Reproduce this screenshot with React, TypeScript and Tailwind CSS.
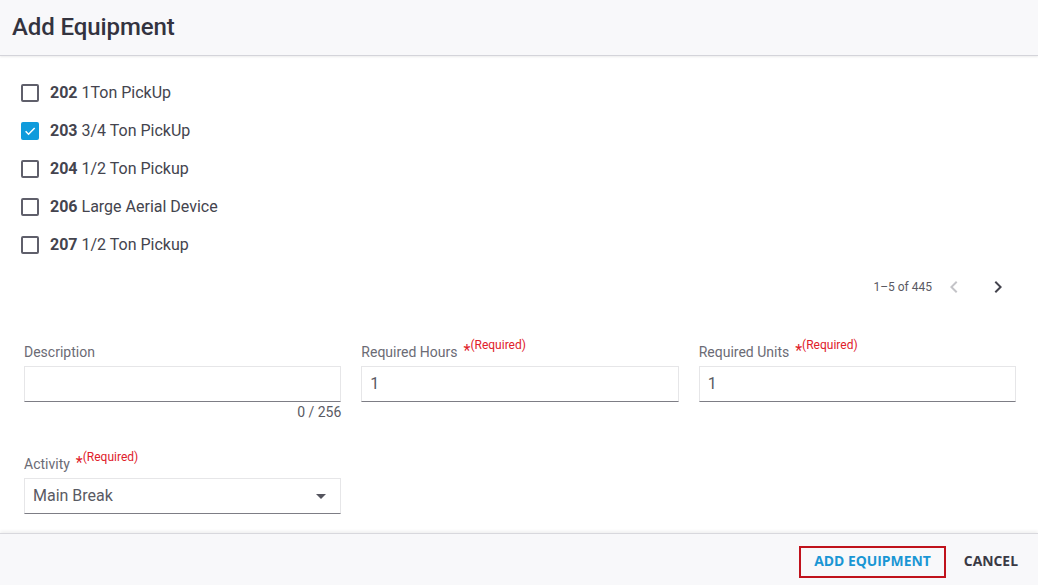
import React from "react";

const items = [
  { code: "202", name: "1Ton PickUp", checked: false },
  { code: "203", name: "3/4 Ton PickUp", checked: true },
  { code: "204", name: "1/2 Ton Pickup", checked: false },
  { code: "206", name: "Large Aerial Device", checked: false },
  { code: "207", name: "1/2 Ton Pickup", checked: false },
];

function Box({ checked }: { checked: boolean }) {
  if (checked)
    return (
      <div className="w-[18px] h-[18px] rounded-[2px] bg-[#0f9bdc] flex items-center justify-center">
        <svg width="14" height="14" viewBox="0 0 24 24">
          <path d="M4.5 12.5l5 5L20 7" fill="none" stroke="white" strokeWidth="2.6" />
        </svg>
      </div>
    );
  return <div className="w-[18px] h-[18px] rounded-[2px] border-2 border-[#5f5f6b] bg-white" />;
}

function Label({ text, req }: { text: string; req?: boolean }) {
  return (
    <div className="h-[16px] flex items-start text-[14px] leading-[16px] text-[#6b6b75]">
      <span>{text}</span>
      {req && (
        <span className="ml-[6px] text-[#e0202a] flex items-start">
          <span className="text-[16px] leading-[16px] -mt-[1px]">*</span>
          <span className="text-[12px] leading-[12px] -mt-[5px]">(Required)</span>
        </span>
      )}
    </div>
  );
}

function Field({ value }: { value: string }) {
  return (
    <div className="h-[36px] border border-[#e6e6e8] border-b-[#7d7d85] bg-white flex items-center px-[8px] text-[16px] text-[#5a5a63]">
      {value}
    </div>
  );
}

export default function App() {
  return (
    <div
      className="w-[1038px] h-[585px] bg-white flex flex-col overflow-hidden"
      style={{ fontFamily: "Roboto, 'Noto Sans', sans-serif" }}
    >
      <div className="h-[56px] bg-[#f8f8fa] border-b border-[#d4d4da] shadow-[0_1px_2px_rgba(0,0,0,0.08)] flex items-center px-[12px] pb-[1px] shrink-0">
        <h1 className="text-[24px] font-medium text-[#33333f] tracking-[-0.1px]">Add Equipment</h1>
      </div>

      <div className="flex-1 flex flex-col">
        <div className="pt-[18px] pl-[21px] flex flex-col">
          {items.map((it) => (
            <div key={it.code} className="h-[38px] flex items-center gap-[11px]">
              <Box checked={it.checked} />
              <div className="text-[16px] text-[#44444e]">
                <span className="font-bold">{it.code}</span> {it.name}
              </div>
            </div>
          ))}
        </div>

        <div className="h-[48px] -mt-[1px] flex items-center justify-end pr-[28px] text-[12px] text-[#5a5a63]">
          <span className="mr-[10px]">1–5 of 445</span>
          <svg width="24" height="24" viewBox="0 0 24 24" className="mr-[20px]">
            <path d="M15.41 7.41L14 6l-6 6 6 6 1.41-1.41L10.83 12z" fill="#c4c4c8" />
          </svg>
          <svg width="24" height="24" viewBox="0 0 24 24">
            <path d="M10 6L8.59 7.41 13.17 12l-4.58 4.59L10 18l6-6z" fill="#44444e" />
          </svg>
        </div>

        <div className="pt-[33px] pl-[24px] pr-[22px] grid grid-cols-3 gap-x-[20px]">
          <div className="flex flex-col">
            <Label text="Description" />
            <div className="mt-[6px]">
              <Field value="" />
            </div>
            <div className="text-right text-[14px] text-[#5a5a63] leading-[16px] mt-[2px]">0 / 256</div>
          </div>
          <div className="flex flex-col">
            <Label text="Required Hours" req />
            <div className="mt-[6px]">
              <Field value="1" />
            </div>
          </div>
          <div className="flex flex-col">
            <Label text="Required Units" req />
            <div className="mt-[6px]">
              <Field value="1" />
            </div>
          </div>
          <div className="flex flex-col mt-[36px]">
            <Label text="Activity" req />
            <div className="mt-[6px] h-[36px] border border-[#e6e6e8] border-b-[#7d7d85] bg-white flex items-center justify-between pl-[8px] pr-[14px] text-[16px] text-[#5a5a63]">
              <span>Main Break</span>
              <svg width="10" height="5" viewBox="0 0 10 5">
                <path d="M0 0l5 5 5-5z" fill="#55555e" />
              </svg>
            </div>
          </div>
        </div>
      </div>

      <div
        className="h-[52px] shrink-0 bg-[#f8f8fa] border-t border-[#d8d8dd] shadow-[0_-2px_3px_rgba(0,0,0,0.06)] flex items-center justify-end pr-[20px] pt-[4px] gap-[18px]"
        style={{ fontFamily: "'Open Sans', 'Noto Sans', sans-serif" }}
      >
        <button className="h-[32px] px-[13px] border-2 border-[#c0121c] text-[#1a96d4] font-bold text-[13.9px]">
          ADD EQUIPMENT
        </button>
        <button className="text-[#3a3a44] font-bold text-[13.9px]">CANCEL</button>
      </div>
    </div>
  );
}
